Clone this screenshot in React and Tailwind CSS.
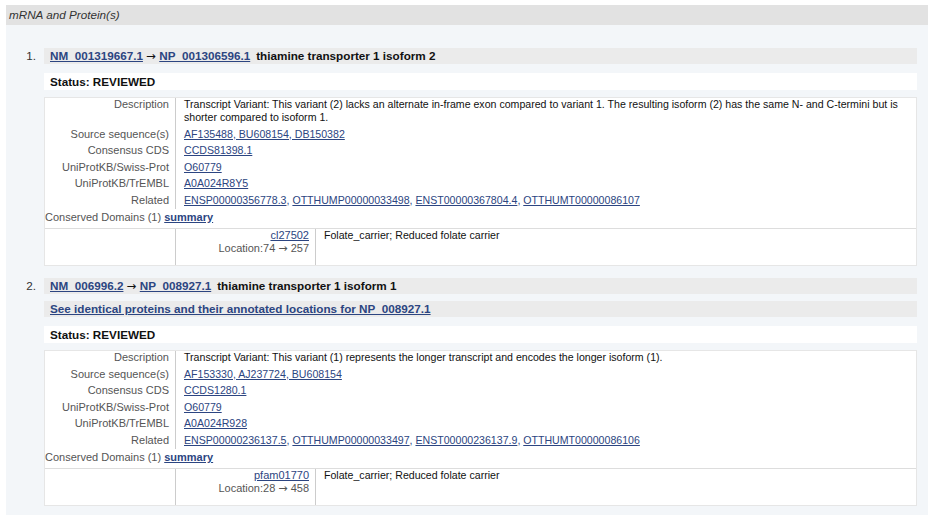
const products = [
  {
    n: 1,
    mrna: 'NM_001319667.1',
    protein: 'NP_001306596.1',
    name: 'thiamine transporter 1 isoform 2',
    identical: null,
    description:
      'Transcript Variant: This variant (2) lacks an alternate in-frame exon compared to variant 1. The resulting isoform (2) has the same N- and C-termini but is shorter compared to isoform 1.',
    source: ['AF135488', 'BU608154', 'DB150382'],
    ccds: 'CCDS81398.1',
    swiss: 'O60779',
    trembl: 'A0A024R8Y5',
    related: ['ENSP00000356778.3', 'OTTHUMP00000033498', 'ENST00000367804.4', 'OTTHUMT00000086107'],
    domain: { id: 'cl27502', from: 74, to: 257, desc: 'Folate_carrier; Reduced folate carrier' },
  },
  {
    n: 2,
    mrna: 'NM_006996.2',
    protein: 'NP_008927.1',
    name: 'thiamine transporter 1 isoform 1',
    identical: 'See identical proteins and their annotated locations for NP_008927.1',
    description:
      'Transcript Variant: This variant (1) represents the longer transcript and encodes the longer isoform (1).',
    source: ['AF153330', 'AJ237724', 'BU608154'],
    ccds: 'CCDS1280.1',
    swiss: 'O60779',
    trembl: 'A0A024R928',
    related: ['ENSP00000236137.5', 'OTTHUMP00000033497', 'ENST00000236137.9', 'OTTHUMT00000086106'],
    domain: { id: 'pfam01770', from: 28, to: 458, desc: 'Folate_carrier; Reduced folate carrier' },
  },
];

const Link = ({ children, bold }) => (
  <a href="#" className={`text-[#2c4581] underline ${bold ? 'font-bold' : ''}`}>
    {children}
  </a>
);

const Arrow = () => <span className="font-['DejaVu_Sans'] font-normal">→</span>;

// comma separated links
const LinkList = ({ items }) => (
  <span>
    {items.map((it, i) => (
      <span key={it}>
        <Link>{it}</Link>
        {i < items.length - 1 && <span className="text-[#2c4581]">, </span>}
      </span>
    ))}
  </span>
);

const Row = ({ label, children, first }) => (
  <div className="flex">
    <div className={`w-[130px] shrink-0 text-right pr-[6px] text-[#555] text-[11px] pb-[1.8px] ${first ? '' : 'pt-[1.8px]'}`}>
      {label}
    </div>
    <div className={`flex-1 border-l border-[#ccc] pl-[8px] pr-[10px] pb-[1.8px] text-[#111] ${first ? '' : 'pt-[1.8px]'}`}>
      {children}
    </div>
  </div>
);

const Product = ({ p }) => (
  <li className="flex mb-[12px]">
    <div className="w-[38px] shrink-0 text-right pr-[8px] text-[11.7px] leading-[16px] text-[#333]">{p.n}.</div>
    <div className="w-[873px]">
      <div className="bg-[#ebebeb] h-[16px] leading-[16px] pl-[6px] text-[11.7px] font-bold text-[#111]">
        <Link bold>{p.mrna}</Link> <Arrow /> <Link bold>{p.protein}</Link>
        <span className="ml-[6px]">{p.name}</span>
      </div>
      {p.identical && (
        <div className="bg-[#ebebeb] h-[16px] leading-[16px] pl-[6px] mt-[7px] text-[11.7px] font-bold">
          <Link bold>{p.identical}</Link>
        </div>
      )}
      <div
        className={`bg-white h-[17px] leading-[17px] pl-[6px] text-[11.7px] font-bold text-[#111] ${
          p.identical ? 'mt-[9px]' : 'mt-[9px]'
        }`}
      >
        Status: REVIEWED
      </div>
      <div className="mt-[7px] bg-white border border-[#e6e6e6] text-[10.6px] leading-[13px]">
        <Row label="Description" first>
          {p.description}
        </Row>
        <Row label="Source sequence(s)">
          <Link>{p.source.join(', ')}</Link>
        </Row>
        <Row label="Consensus CDS">
          <Link>{p.ccds}</Link>
        </Row>
        <Row label="UniProtKB/Swiss-Prot">
          <Link>{p.swiss}</Link>
        </Row>
        <Row label="UniProtKB/TrEMBL">
          <Link>{p.trembl}</Link>
        </Row>
        <Row label="Related">
          <LinkList items={p.related} />
        </Row>
        <div className="text-[#555] text-[11px] pt-[1.8px] pb-[4.5px]">
          Conserved Domains (1) <Link bold>summary</Link>
        </div>
        <div className="flex border-t border-[#ddd] h-[37px] text-[11px]">
          <div className="w-[130px] shrink-0" />
          <div className="w-[140px] shrink-0 border-l border-[#ccc] text-right pr-[6px] leading-[12.5px] text-[#555]">
            <Link>{p.domain.id}</Link>
            <div>
              Location:{p.domain.from} <Arrow /> {p.domain.to}
            </div>
          </div>
          <div className="flex-1 border-l border-[#ccc] pl-[8px] leading-[12.5px] text-[10.6px] text-[#111]">
            {p.domain.desc}
          </div>
        </div>
      </div>
    </div>
  </li>
);

export default function App() {
  return (
    <div className="w-[935px] h-[515px] overflow-hidden bg-white pt-[5px] pl-[6px] pr-[7px] font-['Liberation_Sans',Arial,sans-serif]">
      <div className="bg-[#e2e2e2] h-[20px] leading-[20px] pl-[3px] text-[11.7px] italic text-[#333]">
        mRNA and Protein(s)
      </div>
      <div className="bg-[#f3f6f9] h-[490px] pt-[23px]">
        <ol>
          {products.map((p) => (
            <Product key={p.n} p={p} />
          ))}
        </ol>
      </div>
    </div>
  );
}
